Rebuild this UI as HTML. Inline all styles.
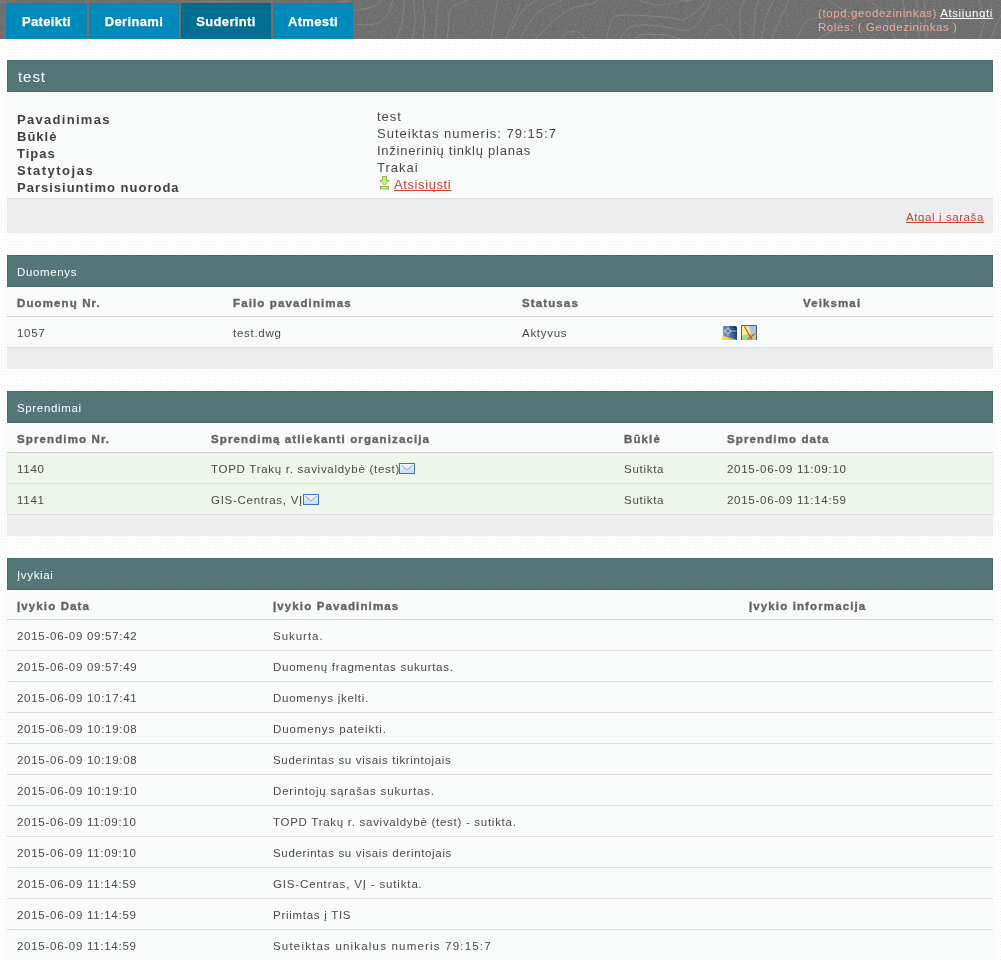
<!DOCTYPE html>
<html><head><meta charset="utf-8"><title>test</title>
<style>
html,body{margin:0;padding:0}
body{width:1001px;height:960px;overflow:hidden;position:relative;font-family:"Liberation Sans",sans-serif;
background-color:#ffffff;}
.t{position:absolute;white-space:pre;text-decoration-skip-ink:none;will-change:transform}
.r{position:absolute}
</style></head><body>
<svg class="r" style="left:0;top:0" width="1001" height="960"><defs><pattern id="bgp" width="3" height="3" patternUnits="userSpaceOnUse"><rect x="2" y="1" width="1" height="1" fill="#f3f3f3"/><rect x="1" y="2" width="1" height="1" fill="#f3f3f3"/></pattern></defs><rect width="1001" height="960" fill="url(#bgp)"/></svg>
<div class="r" style="left:0px;top:0px;width:1001px;height:39px;background:#6c6c6c;"></div>
<svg class="r" style="left:0;top:0" width="1001" height="39"><filter id="nz" x="0" y="0" width="100%" height="100%"><feTurbulence type="fractalNoise" baseFrequency="0.7" numOctaves="2" seed="3"/><feColorMatrix type="matrix" values="0 0 0 0 0.44  0 0 0 0 0.44  0 0 0 0 0.44  1.2 0 0 0 -0.5"/></filter><rect width="1001" height="39" filter="url(#nz)" opacity="0.5"/></svg>
<svg class="r" style="left:0;top:0" width="1001" height="39" viewBox="0 0 1001 39">
<g fill="none" stroke="#868686" stroke-width="0.9">
<path d="M353 10.5 C360 10 372 8 377 5 S381 1 382 0"/>
<path d="M353 23.7 C362 25 372 26 380 22 S390 10 392.4 0"/>
<path d="M396 39 C400 30 402 25 402.6 20 S404 5 404 0"/>
<path d="M412 39 C414 30 415 25 415 20 S414 5 413.7 0"/>
<path d="M423 39 C424 30 424.7 25 424.7 20 S423 5 423 0"/>
<path d="M435 39 C436 30 436.6 25 436.6 20 S438 5 438 0"/>
<path d="M447.6 39 C448 30 449 20 449 15 S452 5 469 0"/>
<path d="M491 39 C493 30 495 15 496 10 S497.7 2 497.7 0"/>
<path d="M506 39 C510 28 513 20 516 15 S519 7 520 5"/>
<path d="M511.7 30 C515 22 520 14 523.6 10 S532 3 537 0"/>
<path d="M520 39 C525 30 530 20 535.5 15 S545 7 550.7 5 S558 2 561 0"/>
<path d="M535.5 39 C545 30 552 22 561 15 S578 6 586 5 S595 2 598 0"/>
<path d="M561 39 C565 34 569 31 573 31 S581 33 586 39"/>
<path d="M606.8 39 C608 30 610 24 612 20 S620 15 629 15 S650 16 663 17 S675 19 680 20 S700 10 707 0"/>
<path d="M620 39 C623 34 626 30 629 28 S640 25 646 25 S668 27 680 30 S696 25 700.6 20 S708 5 710.7 0"/>
<path d="M634 39 C638 36 642 34 646 34 S658 35 663 35 S676 37 680 39"/>
<path d="M639 0 C645 3 652 5 659 5 S670 4 673 3 S680 1 694 0"/>
<path d="M704 39 C708 33 712 27 717.5 25 S723 26 726 28 S732 35 734.5 39"/>
<path d="M741 39 C740 30 739.6 20 739.6 15 S743 4 744.7 0"/>
<path d="M753 39 C754 30 755 20 755 15 S757 4 758 0"/>
<path d="M761.7 39 C763 30 765 20 766.8 15 S771 5 773.6 0"/>
<path d="M772 39 C775 30 778 22 782 15 S786 5 788.8 0"/>
<path d="M797 39 C800 32 802 26 806 22 S815 18 823 18 S835 16 845 18 S858 28 875 39"/>
<path d="M819 39 C823 36 827 33 831 32 S838 30 845 30"/>
<path d="M828 0 C832 3 836 6 840 8 S850 14 858 16"/>
<path d="M868 0 C872 3 878 6 882 10 S886 15 887 20 S892 32 895.5 39"/>
<path d="M903 0 C905 10 906 20 905.7 39"/>
<path d="M916 0 C918 10 919 25 919 39"/>
<path d="M924 0 C925 10 926 25 926 39"/>
<path d="M978.7 0 C981 6 983 12 983.8 20 S981 30 980 39"/>
<path d="M990.6 39 C993 32 996 26 999 20 S1001 12 1001 10"/>
<path d="M0 2 C40 4 80 1 120 3 S200 0 240 2 S320 4 350 1"/>
</g></svg>
<div class="r" style="left:5px;top:2px;width:350px;height:37px;background:#7b6d67;"></div>
<div class="r" style="left:6px;top:3px;width:81px;height:36px;background:#0089bb;"></div>
<div class="t" style="left:6px;top:15px;width:81px;text-align:center;font-size:13px;line-height:13px;letter-spacing:0.34px;color:#fff;font-weight:bold;-webkit-text-stroke:0.25px #fff">Pateikti</div>
<div class="r" style="left:89px;top:3px;width:90px;height:36px;background:#0089bb;"></div>
<div class="t" style="left:89px;top:15px;width:90px;text-align:center;font-size:13px;line-height:13px;letter-spacing:0.34px;color:#fff;font-weight:bold;-webkit-text-stroke:0.25px #fff">Derinami</div>
<div class="r" style="left:181px;top:3px;width:90px;height:36px;background:#006d92;"></div>
<div class="t" style="left:181px;top:15px;width:90px;text-align:center;font-size:13px;line-height:13px;letter-spacing:0.34px;color:#fff;font-weight:bold;-webkit-text-stroke:0.25px #fff">Suderinti</div>
<div class="r" style="left:273px;top:3px;width:80px;height:36px;background:#0089bb;"></div>
<div class="t" style="left:273px;top:15px;width:80px;text-align:center;font-size:13px;line-height:13px;letter-spacing:0.34px;color:#fff;font-weight:bold;-webkit-text-stroke:0.25px #fff">Atmesti</div>
<div class="t" style="left:818px;top:8px;font-size:11.5px;line-height:11.5px;letter-spacing:0.61px;color:#eea898;">(topd.geodezininkas) <span style="color:#fff;text-decoration:underline">Atsijungti</span></div>
<div class="t" style="left:818px;top:22px;font-size:11.5px;line-height:11.5px;letter-spacing:0.56px;color:#eea898;">Rolės: ( Geodezininkas )</div>
<div class="r" style="left:7px;top:60px;width:986px;height:32px;background:#547677;border:1px solid #4b6c6f;box-sizing:border-box"></div>
<div class="t" style="left:18px;top:69px;font-size:15px;line-height:15px;letter-spacing:0.95px;color:#fff;">test</div>
<div class="r" style="left:6px;top:93px;width:988px;height:105px;background:#f9fbfa;"></div>
<div class="t" style="left:17px;top:113px;font-size:13px;line-height:13px;letter-spacing:1.3px;color:#404040;font-weight:bold;">Pavadinimas</div>
<div class="t" style="left:17px;top:130px;font-size:13px;line-height:13px;letter-spacing:1.0px;color:#404040;font-weight:bold;">Būklė</div>
<div class="t" style="left:17px;top:147px;font-size:13px;line-height:13px;letter-spacing:1.0px;color:#404040;font-weight:bold;">Tipas</div>
<div class="t" style="left:17px;top:164px;font-size:13px;line-height:13px;letter-spacing:1.5px;color:#404040;font-weight:bold;">Statytojas</div>
<div class="t" style="left:17px;top:181px;font-size:13px;line-height:13px;letter-spacing:1.0px;color:#404040;font-weight:bold;">Parsisiuntimo nuoroda</div>
<div class="t" style="left:377px;top:110px;font-size:13px;line-height:13px;letter-spacing:1.0px;color:#484848;">test</div>
<div class="t" style="left:377px;top:127px;font-size:13px;line-height:13px;letter-spacing:1.0px;color:#484848;">Suteiktas numeris: 79:15:7</div>
<div class="t" style="left:377px;top:144px;font-size:13px;line-height:13px;letter-spacing:0.75px;color:#484848;">Inžinerinių tinklų planas</div>
<div class="t" style="left:377px;top:161px;font-size:13px;line-height:13px;letter-spacing:1.0px;color:#484848;">Trakai</div>
<svg class="r" style="left:379px;top:175px" width="12" height="15" viewBox="0 0 12 15">
<path d="M3.5 1.5 H7.5 V5.5 H10 L5.5 10 L1 5.5 H3.5 Z" fill="#c4f47e" stroke="#8db455" stroke-width="1"/>
<rect x="1.5" y="11.5" width="8" height="2.5" fill="#c4f47e" stroke="#8db455" stroke-width="1"/>
</svg>
<div class="t" style="left:394px;top:178px;font-size:13px;line-height:13px;letter-spacing:0.6px;color:#c0462c;"><span style="text-decoration:underline">Atsisiųsti</span></div>
<div class="r" style="left:7px;top:198px;width:986px;height:35px;background:#ededed;border-top:1px solid #dcdcdc;box-sizing:border-box"></div>
<div class="t" style="right:17px;top:212px;font-size:11.5px;line-height:11.5px;letter-spacing:0.59px;color:#c0462c;text-decoration:underline">Atgal į sąrašą</div>
<div class="r" style="left:7px;top:255px;width:986px;height:32px;background:#547677;border:1px solid #4b6c6f;box-sizing:border-box"></div>
<div class="t" style="left:17px;top:267px;font-size:11.5px;line-height:11.5px;letter-spacing:0.65px;color:#fff;">Duomenys</div>
<div class="r" style="left:6px;top:288px;width:988px;height:28px;background:#f9fbfa;"></div>
<div class="t" style="left:17px;top:298px;font-size:11.5px;line-height:11.5px;letter-spacing:1.12px;color:#626262;font-weight:bold;-webkit-text-stroke:0.35px #626262;">Duomenų Nr.</div>
<div class="t" style="left:233px;top:298px;font-size:11.5px;line-height:11.5px;letter-spacing:1.12px;color:#626262;font-weight:bold;-webkit-text-stroke:0.35px #626262;">Failo pavadinimas</div>
<div class="t" style="left:522px;top:298px;font-size:11.5px;line-height:11.5px;letter-spacing:1.12px;color:#626262;font-weight:bold;-webkit-text-stroke:0.35px #626262;">Statusas</div>
<div class="t" style="left:803px;top:298px;font-size:11.5px;line-height:11.5px;letter-spacing:1.12px;color:#626262;font-weight:bold;-webkit-text-stroke:0.35px #626262;">Veiksmai</div>
<div class="r" style="left:6px;top:316px;width:988px;height:1px;background:#f9fbfa;"></div>
<div class="r" style="left:7px;top:316px;width:986px;height:1px;background:#d6d3cc;"></div>
<div class="r" style="left:6px;top:317px;width:988px;height:30px;background:#f9fbfa;"></div>
<div class="t" style="left:17px;top:328px;font-size:11.5px;line-height:11.5px;letter-spacing:0.72px;color:#484848;">1057</div>
<div class="t" style="left:233px;top:328px;font-size:11.5px;line-height:11.5px;letter-spacing:0.72px;color:#484848;">test.dwg</div>
<div class="t" style="left:522px;top:328px;font-size:11.5px;line-height:11.5px;letter-spacing:0.72px;color:#484848;">Aktyvus</div>
<div class="r" style="left:6px;top:347px;width:988px;height:1px;background:#f9fbfa;"></div>
<div class="r" style="left:7px;top:347px;width:986px;height:1px;background:#dfdfdf;"></div>
<div class="r" style="left:7px;top:348px;width:986px;height:21px;background:#ededed;"></div>
<svg class="r" style="left:722px;top:326px" width="16" height="14" viewBox="0 0 16 14">
<defs><linearGradient id="g1" x1="0" y1="0.3" x2="1" y2="0"><stop offset="0" stop-color="#7d9cc4"/><stop offset="0.55" stop-color="#3c5f95"/><stop offset="1" stop-color="#0c1f4e"/></linearGradient>
<linearGradient id="g2" x1="0" y1="0" x2="1" y2="0"><stop offset="0" stop-color="#f4e26a"/><stop offset="1" stop-color="#e8b800"/></linearGradient></defs>
<path d="M1 0 H13 Q15 0 15 2 V14 H1 Z" fill="url(#g1)"/>
<path d="M0 9.5 L15 14 H0 Z" fill="url(#g2)"/>
<circle cx="6" cy="5" r="2.3" fill="#5f7fa6" stroke="#c8d8e4" stroke-width="1"/>
<path d="M8.5 5 H14.5 M6 0 V2.5 M6 7.5 V10 M0.5 5 H3.5" stroke="#b8ccd8" stroke-width="0.9"/>
</svg>
<svg class="r" style="left:741px;top:325px" width="16" height="15" viewBox="0 0 16 15">
<rect x="1" y="1" width="14" height="14" fill="#eef088"/>
<path d="M8 1 H15 V8 L10 9 Z" fill="#94b8ec"/>
<path d="M1 10.5 Q6 8.5 10 9 L15 8 V15 H1 Z" fill="#9ad27a"/>
<path d="M3 1 V15 M5 1 V15 M7 1 V15 M9 1 V15 M11 1 V15 M13 1 V15 M1 3 H15 M1 5 H15 M1 7 H15 M1 9 H15 M1 11 H15 M1 13 H15" stroke="#ffffff" stroke-width="0.5" opacity="0.35"/>
<path d="M3.5 1.5 L11 14.5 M6.5 14.5 L14 8.5" stroke="#ec4c3c" stroke-width="1.4"/>
<path d="M0.5 15 V0.5 H15.5 V15" fill="none" stroke="#5a6052" stroke-width="1"/>
</svg>
<div class="r" style="left:7px;top:391px;width:986px;height:32px;background:#547677;border:1px solid #4b6c6f;box-sizing:border-box"></div>
<div class="t" style="left:17px;top:403px;font-size:11.5px;line-height:11.5px;letter-spacing:0.65px;color:#fff;">Sprendimai</div>
<div class="r" style="left:6px;top:424px;width:988px;height:28px;background:#f9fbfa;"></div>
<div class="t" style="left:17px;top:434px;font-size:11.5px;line-height:11.5px;letter-spacing:1.12px;color:#626262;font-weight:bold;-webkit-text-stroke:0.35px #626262;">Sprendimo Nr.</div>
<div class="t" style="left:211px;top:434px;font-size:11.5px;line-height:11.5px;letter-spacing:1.12px;color:#626262;font-weight:bold;-webkit-text-stroke:0.35px #626262;">Sprendimą atliekanti organizacija</div>
<div class="t" style="left:624px;top:434px;font-size:11.5px;line-height:11.5px;letter-spacing:1.12px;color:#626262;font-weight:bold;-webkit-text-stroke:0.35px #626262;">Būklė</div>
<div class="t" style="left:727px;top:434px;font-size:11.5px;line-height:11.5px;letter-spacing:1.12px;color:#626262;font-weight:bold;-webkit-text-stroke:0.35px #626262;">Sprendimo data</div>
<div class="r" style="left:6px;top:452px;width:988px;height:1px;background:#f9fbfa;"></div>
<div class="r" style="left:7px;top:452px;width:986px;height:1px;background:#d6d3cc;"></div>
<div class="r" style="left:6px;top:453px;width:988px;height:30px;background:#eef5ea;"></div>
<div class="t" style="left:17px;top:464px;font-size:11.5px;line-height:11.5px;letter-spacing:0.72px;color:#484848;">1140</div>
<div class="t" style="left:211px;top:464px;font-size:11.5px;line-height:11.5px;letter-spacing:0.72px;color:#484848;">TOPD Trakų r. savivaldybė (test)</div>
<div class="t" style="left:624px;top:464px;font-size:11.5px;line-height:11.5px;letter-spacing:0.72px;color:#484848;">Sutikta</div>
<div class="t" style="left:727px;top:464px;font-size:11.5px;line-height:11.5px;letter-spacing:0.72px;color:#484848;">2015-06-09 11:09:10</div>
<div class="r" style="left:6px;top:483px;width:988px;height:1px;background:#eef5ea;"></div>
<div class="r" style="left:7px;top:483px;width:986px;height:1px;background:#dfdfdf;"></div>
<div class="r" style="left:6px;top:484px;width:988px;height:30px;background:#eef5ea;"></div>
<div class="t" style="left:17px;top:495px;font-size:11.5px;line-height:11.5px;letter-spacing:0.72px;color:#484848;">1141</div>
<div class="t" style="left:211px;top:495px;font-size:11.5px;line-height:11.5px;letter-spacing:0.72px;color:#484848;">GIS-Centras, VĮ</div>
<div class="t" style="left:624px;top:495px;font-size:11.5px;line-height:11.5px;letter-spacing:0.72px;color:#484848;">Sutikta</div>
<div class="t" style="left:727px;top:495px;font-size:11.5px;line-height:11.5px;letter-spacing:0.72px;color:#484848;">2015-06-09 11:14:59</div>
<div class="r" style="left:6px;top:514px;width:988px;height:1px;background:#eef5ea;"></div>
<div class="r" style="left:7px;top:514px;width:986px;height:1px;background:#dfdfdf;"></div>
<div class="r" style="left:7px;top:515px;width:986px;height:21px;background:#ededed;"></div>
<svg class="r" style="left:399px;top:463px" width="16" height="11" viewBox="0 0 16 11">
<defs><linearGradient id="ge399" x1="0" y1="0" x2="0" y2="1"><stop offset="0" stop-color="#f4f8ff"/><stop offset="1" stop-color="#c8ddf8"/></linearGradient></defs>
<rect x="0.5" y="0.5" width="15" height="10" fill="url(#ge399)" stroke="#3f74c4" stroke-width="1"/>
<path d="M1.5 9.5 L6 5.5 M14.5 9.5 L10 5.5" fill="none" stroke="#b8d0f0" stroke-width="0.8"/>
<path d="M2 2 L8 7 L14 2" fill="none" stroke="#85ace2" stroke-width="1"/>
</svg>
<svg class="r" style="left:303px;top:494px" width="16" height="11" viewBox="0 0 16 11">
<defs><linearGradient id="ge303" x1="0" y1="0" x2="0" y2="1"><stop offset="0" stop-color="#f4f8ff"/><stop offset="1" stop-color="#c8ddf8"/></linearGradient></defs>
<rect x="0.5" y="0.5" width="15" height="10" fill="url(#ge303)" stroke="#3f74c4" stroke-width="1"/>
<path d="M1.5 9.5 L6 5.5 M14.5 9.5 L10 5.5" fill="none" stroke="#b8d0f0" stroke-width="0.8"/>
<path d="M2 2 L8 7 L14 2" fill="none" stroke="#85ace2" stroke-width="1"/>
</svg>
<div class="r" style="left:7px;top:558px;width:986px;height:32px;background:#547677;border:1px solid #4b6c6f;box-sizing:border-box"></div>
<div class="t" style="left:17px;top:570px;font-size:11.5px;line-height:11.5px;letter-spacing:0.65px;color:#fff;">Įvykiai</div>
<div class="r" style="left:6px;top:591px;width:988px;height:28px;background:#f9fbfa;"></div>
<div class="t" style="left:17px;top:601px;font-size:11.5px;line-height:11.5px;letter-spacing:1.12px;color:#626262;font-weight:bold;-webkit-text-stroke:0.35px #626262;">Įvykio Data</div>
<div class="t" style="left:273px;top:601px;font-size:11.5px;line-height:11.5px;letter-spacing:1.12px;color:#626262;font-weight:bold;-webkit-text-stroke:0.35px #626262;">Įvykio Pavadinimas</div>
<div class="t" style="left:749px;top:601px;font-size:11.5px;line-height:11.5px;letter-spacing:1.12px;color:#626262;font-weight:bold;-webkit-text-stroke:0.35px #626262;">Įvykio informacija</div>
<div class="r" style="left:6px;top:619px;width:988px;height:1px;background:#f9fbfa;"></div>
<div class="r" style="left:7px;top:619px;width:986px;height:1px;background:#d6d3cc;"></div>
<div class="r" style="left:6px;top:620px;width:988px;height:30px;background:#f9fbfa;"></div>
<div class="t" style="left:17px;top:631px;font-size:11.5px;line-height:11.5px;letter-spacing:0.72px;color:#484848;">2015-06-09 09:57:42</div>
<div class="t" style="left:273px;top:631px;font-size:11.5px;line-height:11.5px;letter-spacing:0.97px;color:#484848;">Sukurta.</div>
<div class="r" style="left:6px;top:650px;width:988px;height:1px;background:#f9fbfa;"></div>
<div class="r" style="left:7px;top:650px;width:986px;height:1px;background:#dfdfdf;"></div>
<div class="r" style="left:6px;top:651px;width:988px;height:30px;background:#f9fbfa;"></div>
<div class="t" style="left:17px;top:662px;font-size:11.5px;line-height:11.5px;letter-spacing:0.72px;color:#484848;">2015-06-09 09:57:49</div>
<div class="t" style="left:273px;top:662px;font-size:11.5px;line-height:11.5px;letter-spacing:0.72px;color:#484848;">Duomenų fragmentas sukurtas.</div>
<div class="r" style="left:6px;top:681px;width:988px;height:1px;background:#f9fbfa;"></div>
<div class="r" style="left:7px;top:681px;width:986px;height:1px;background:#dfdfdf;"></div>
<div class="r" style="left:6px;top:682px;width:988px;height:30px;background:#f9fbfa;"></div>
<div class="t" style="left:17px;top:693px;font-size:11.5px;line-height:11.5px;letter-spacing:0.72px;color:#484848;">2015-06-09 10:17:41</div>
<div class="t" style="left:273px;top:693px;font-size:11.5px;line-height:11.5px;letter-spacing:0.72px;color:#484848;">Duomenys įkelti.</div>
<div class="r" style="left:6px;top:712px;width:988px;height:1px;background:#f9fbfa;"></div>
<div class="r" style="left:7px;top:712px;width:986px;height:1px;background:#dfdfdf;"></div>
<div class="r" style="left:6px;top:713px;width:988px;height:30px;background:#f9fbfa;"></div>
<div class="t" style="left:17px;top:724px;font-size:11.5px;line-height:11.5px;letter-spacing:0.72px;color:#484848;">2015-06-09 10:19:08</div>
<div class="t" style="left:273px;top:724px;font-size:11.5px;line-height:11.5px;letter-spacing:0.89px;color:#484848;">Duomenys pateikti.</div>
<div class="r" style="left:6px;top:743px;width:988px;height:1px;background:#f9fbfa;"></div>
<div class="r" style="left:7px;top:743px;width:986px;height:1px;background:#dfdfdf;"></div>
<div class="r" style="left:6px;top:744px;width:988px;height:30px;background:#f9fbfa;"></div>
<div class="t" style="left:17px;top:755px;font-size:11.5px;line-height:11.5px;letter-spacing:0.72px;color:#484848;">2015-06-09 10:19:08</div>
<div class="t" style="left:273px;top:755px;font-size:11.5px;line-height:11.5px;letter-spacing:0.66px;color:#484848;">Suderintas su visais tikrintojais</div>
<div class="r" style="left:6px;top:774px;width:988px;height:1px;background:#f9fbfa;"></div>
<div class="r" style="left:7px;top:774px;width:986px;height:1px;background:#dfdfdf;"></div>
<div class="r" style="left:6px;top:775px;width:988px;height:30px;background:#f9fbfa;"></div>
<div class="t" style="left:17px;top:786px;font-size:11.5px;line-height:11.5px;letter-spacing:0.72px;color:#484848;">2015-06-09 10:19:10</div>
<div class="t" style="left:273px;top:786px;font-size:11.5px;line-height:11.5px;letter-spacing:0.83px;color:#484848;">Derintojų sąrašas sukurtas.</div>
<div class="r" style="left:6px;top:805px;width:988px;height:1px;background:#f9fbfa;"></div>
<div class="r" style="left:7px;top:805px;width:986px;height:1px;background:#dfdfdf;"></div>
<div class="r" style="left:6px;top:806px;width:988px;height:30px;background:#f9fbfa;"></div>
<div class="t" style="left:17px;top:817px;font-size:11.5px;line-height:11.5px;letter-spacing:0.72px;color:#484848;">2015-06-09 11:09:10</div>
<div class="t" style="left:273px;top:817px;font-size:11.5px;line-height:11.5px;letter-spacing:0.72px;color:#484848;">TOPD Trakų r. savivaldybė (test) - sutikta.</div>
<div class="r" style="left:6px;top:836px;width:988px;height:1px;background:#f9fbfa;"></div>
<div class="r" style="left:7px;top:836px;width:986px;height:1px;background:#dfdfdf;"></div>
<div class="r" style="left:6px;top:837px;width:988px;height:30px;background:#f9fbfa;"></div>
<div class="t" style="left:17px;top:848px;font-size:11.5px;line-height:11.5px;letter-spacing:0.72px;color:#484848;">2015-06-09 11:09:10</div>
<div class="t" style="left:273px;top:848px;font-size:11.5px;line-height:11.5px;letter-spacing:0.66px;color:#484848;">Suderintas su visais derintojais</div>
<div class="r" style="left:6px;top:867px;width:988px;height:1px;background:#f9fbfa;"></div>
<div class="r" style="left:7px;top:867px;width:986px;height:1px;background:#dfdfdf;"></div>
<div class="r" style="left:6px;top:868px;width:988px;height:30px;background:#f9fbfa;"></div>
<div class="t" style="left:17px;top:879px;font-size:11.5px;line-height:11.5px;letter-spacing:0.72px;color:#484848;">2015-06-09 11:14:59</div>
<div class="t" style="left:273px;top:879px;font-size:11.5px;line-height:11.5px;letter-spacing:0.84px;color:#484848;">GIS-Centras, VĮ - sutikta.</div>
<div class="r" style="left:6px;top:898px;width:988px;height:1px;background:#f9fbfa;"></div>
<div class="r" style="left:7px;top:898px;width:986px;height:1px;background:#dfdfdf;"></div>
<div class="r" style="left:6px;top:899px;width:988px;height:30px;background:#f9fbfa;"></div>
<div class="t" style="left:17px;top:910px;font-size:11.5px;line-height:11.5px;letter-spacing:0.72px;color:#484848;">2015-06-09 11:14:59</div>
<div class="t" style="left:273px;top:910px;font-size:11.5px;line-height:11.5px;letter-spacing:0.72px;color:#484848;">Priimtas į TIS</div>
<div class="r" style="left:6px;top:929px;width:988px;height:1px;background:#f9fbfa;"></div>
<div class="r" style="left:7px;top:929px;width:986px;height:1px;background:#dfdfdf;"></div>
<div class="r" style="left:6px;top:930px;width:988px;height:30px;background:#f9fbfa;"></div>
<div class="t" style="left:17px;top:941px;font-size:11.5px;line-height:11.5px;letter-spacing:0.72px;color:#484848;">2015-06-09 11:14:59</div>
<div class="t" style="left:273px;top:941px;font-size:11.5px;line-height:11.5px;letter-spacing:1.19px;color:#484848;">Suteiktas unikalus numeris 79:15:7</div>
<div class="r" style="left:6px;top:960px;width:988px;height:1px;background:#f9fbfa;"></div>
<div class="r" style="left:7px;top:960px;width:986px;height:1px;background:#dfdfdf;"></div>
</body></html>
